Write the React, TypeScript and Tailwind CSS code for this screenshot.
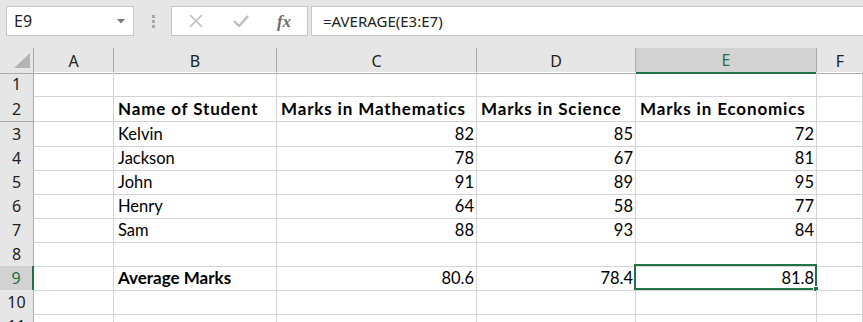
import React from "react";

const cols = ["A", "B", "C", "D", "E", "F"];
const grid = "grid grid-cols-[34px_80px_163px_200px_159px_181px_1fr]";
const cellFont = { fontFamily: "Lato, 'Liberation Sans', sans-serif" };

type Row = { n: number; h: string; cells: (string | null)[]; bold?: boolean };

const rows: Row[] = [
  { n: 1, h: "h-[24px]", cells: [null, null, null, null, null, null] },
  { n: 2, h: "h-[26px]", cells: [null, "Name of Student", "Marks in Mathematics", "Marks in Science", "Marks in Economics", null], bold: true },
  { n: 3, h: "h-[24px]", cells: [null, "Kelvin", "82", "85", "72", null] },
  { n: 4, h: "h-[24px]", cells: [null, "Jackson", "78", "67", "81", null] },
  { n: 5, h: "h-[24px]", cells: [null, "John", "91", "89", "95", null] },
  { n: 6, h: "h-[24px]", cells: [null, "Henry", "64", "58", "77", null] },
  { n: 7, h: "h-[24px]", cells: [null, "Sam", "88", "93", "84", null] },
  { n: 8, h: "h-[24px]", cells: [null, null, null, null, null, null] },
  { n: 9, h: "h-[24px]", cells: [null, "Average Marks", "80.6", "78.4", "81.8", null] },
  { n: 10, h: "h-[24px]", cells: [null, null, null, null, null, null] },
  { n: 11, h: "h-[24px]", cells: [null, null, null, null, null, null] },
];

export default function App() {
  return (
    <div className="w-[863px] h-[322px] overflow-hidden bg-white">
      {/* Formula bar */}
      <div className="h-[48px] bg-[#e6e6e6] flex items-start pt-[6px] pl-[6px] gap-0">
        <div className="w-[128px] h-[30px] bg-white border border-[#c6c6c6] flex items-center justify-between pl-[7px] pr-[8px]">
          <span className="text-[16px] text-[#222]" style={{ fontFamily: "'Noto Sans', sans-serif" }}>E9</span>
          <svg width="8" height="5" viewBox="0 0 8 5"><path d="M0 0 L8 0 L4 4.5 Z" fill="#7a7a7a" /></svg>
        </div>
        <div className="w-[37px] h-[30px] flex flex-col items-center justify-center gap-[2px] pl-[1px]">
          <div className="w-[3px] h-[3px] bg-[#a8a8a8]" />
          <div className="w-[3px] h-[3px] bg-[#a8a8a8]" />
          <div className="w-[3px] h-[3px] bg-[#a8a8a8]" />
        </div>
        <div className="w-[137px] h-[30px] bg-white border border-[#c6c6c6] flex items-center">
          <div className="w-[46px] flex justify-center pl-[2px]">
            <svg width="14" height="14" viewBox="0 0 14 14"><path d="M1 1 L13 13 M13 1 L1 13" stroke="#bdbdbd" strokeWidth="1.6" /></svg>
          </div>
          <div className="w-[46px] flex justify-center">
            <svg width="16" height="12" viewBox="0 0 16 12"><path d="M1 6 L6 11 L15 1" stroke="#bdbdbd" strokeWidth="2.4" fill="none" /></svg>
          </div>
          <div className="w-[40px] flex justify-center">
            <span className="text-[17px] italic font-bold text-[#6d6d6d] leading-none" style={{ fontFamily: "'Liberation Serif', serif" }}>fx</span>
          </div>
        </div>
        <div className="ml-[3px] flex-1 h-[30px] bg-white border border-[#c6c6c6] border-r-0 flex items-center pl-[11px]">
          <span className="text-[15px] text-[#222]" style={{ fontFamily: "'Noto Sans', sans-serif" }}>=AVERAGE(E3:E7)</span>
        </div>
      </div>

      {/* Column headers */}
      <div className={`${grid} h-[24px] bg-[#e6e6e6]`} style={{ fontFamily: "'Noto Sans', sans-serif" }}>
        <div className="border-r border-b border-[#ababab] relative">
          <svg className="absolute left-[14px] top-[5px]" width="16" height="15" viewBox="0 0 16 15"><path d="M16 0 L16 15 L0 15 Z" fill="#b4b4b4" /></svg>
        </div>
        {cols.map((c) => {
          const sel = c === "E";
          return (
            <div
              key={c}
              className={`flex items-center justify-center text-[16px] ${sel ? "bg-[#d2d2d2] border-b-2 border-b-[#217346] text-[#217346]" : "border-b border-b-[#ababab] text-[#222]"} ${c !== "F" ? "border-r border-r-[#ababab]" : ""}`}
            >
              {c}
            </div>
          );
        })}
      </div>

      {/* Rows */}
      {rows.map((r) => {
        const selRow = r.n === 9;
        return (
          <div key={r.n} className={`${grid} ${r.h}`}>
            <div
              className={`flex items-center justify-center text-[16px] border-b border-b-[#ababab] ${selRow ? "bg-[#d2d2d2] text-[#217346] border-r-2 border-r-[#217346]" : "bg-[#e6e6e6] text-[#222] border-r border-r-[#ababab]"}`}
              style={{ fontFamily: "'Noto Sans', sans-serif" }}
            >
              {r.n}
            </div>
            {r.cells.map((v, i) => {
              const isText = i === 1;
              const headerBold = r.bold && v;
              const avgBold = r.n === 9 && i === 1;
              const isE9 = r.n === 9 && i === 4;
              return (
                <div
                  key={i}
                  className={`relative flex items-end pb-[2px] border-b border-r border-[#d4d4d4] text-black whitespace-nowrap leading-[20px] ${isText || r.bold ? "justify-start pl-[4px]" : "justify-end pr-[2px]"} ${headerBold ? "font-bold text-[17px] tracking-[0.85px]" : avgBold ? "font-bold text-[17px]" : "text-[16.5px]"}`}
                  style={cellFont}
                >
                  {v}
                  {isE9 && (
                    <div className="absolute left-[-2px] top-[-2px] w-[183px] h-[26px] border-2 border-[#217346] pointer-events-none">
                      <div className="absolute right-[-4px] bottom-[-4px] w-[6px] h-[6px] bg-[#217346] border border-white" />
                    </div>
                  )}
                </div>
              );
            })}
          </div>
        );
      })}
    </div>
  );
}
